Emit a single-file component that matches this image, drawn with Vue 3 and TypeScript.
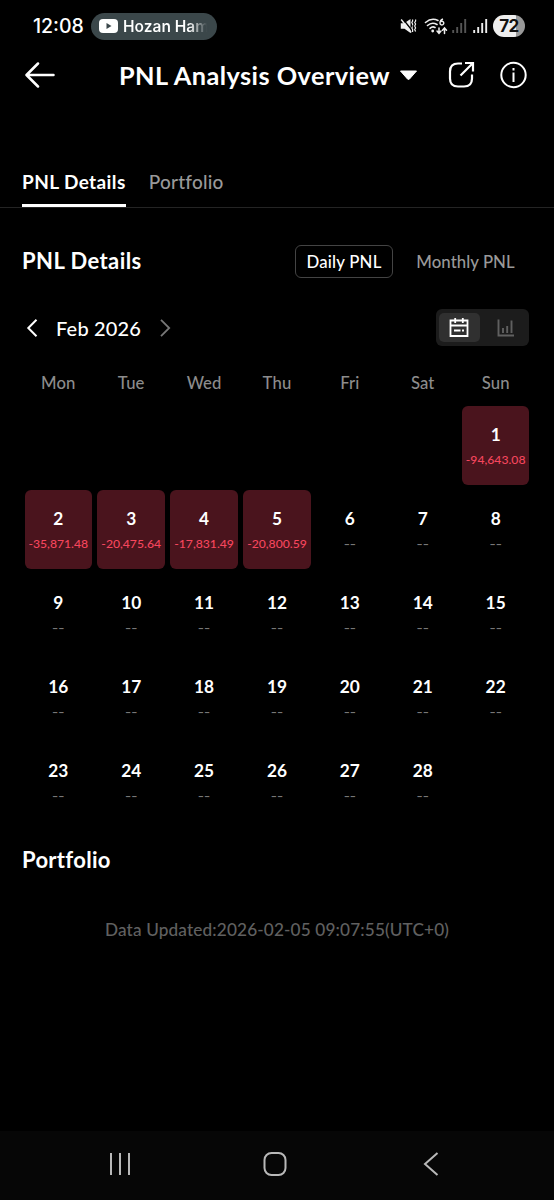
<script setup lang="ts">
interface Day { n: number; pnl: string }
const weekdays: string[] = ['Mon', 'Tue', 'Wed', 'Thu', 'Fri', 'Sat', 'Sun']
const results: Record<number, string> = {
  1: '-94,643.08', 2: '-35,871.48', 3: '-20,475.64', 4: '-17,831.49', 5: '-20,800.59',
}
const days: Day[] = Array.from({ length: 28 }, (_, i) => ({ n: i + 1, pnl: results[i + 1] ?? '' }))
</script>

<template>
  <main class="screen">
    <div class="status">
      <span class="clock">12:08</span>
      <div class="pill">
        <svg width="19" height="14" viewBox="0 0 19 14"><rect width="19" height="14" rx="4" fill="#fff" /><path d="M7.5 4v6l5-3z" fill="#3b474a" /></svg>
        <span class="pill-text">Hozan Ham</span>
      </div>
      <div class="indicators">
        <svg width="17" height="16" viewBox="0 0 17 16">
          <path d="M.8 5.200h3.400L10.500 1v14L4.500 10.800H.8z" fill="#eee" />
          <path d="M2.500 .5l10 12.500" stroke="#000" stroke-width="1.300" />
          <path d="M1.200 1.500l10 13" stroke="#eee" stroke-width="1.400" />
          <path d="M12.600 1.500v1.500l-.8 1.500.8 1.500v1.500M12.600 8.500l-.8 1.500.8 1.500v2.500M15.600 1.500v1.500l-.9 1.500.9 1.500-.9 2 .9 2-.9 1.500.9 2" fill="none" stroke="#eee" stroke-width="1.200" />
        </svg>
        <svg class="i-wifi" width="24" height="17" viewBox="0 0 24 17">
          <g fill="none" stroke="#eee" stroke-width="1.6" stroke-linecap="round">
            <path d="M1.500 4.500Q7.500-.7 14 2.500M3.500 7.500Q8 3.500 13 6.500M6 10.300Q8.500 8 11 9.500" />
            <path d="M15 10v5M13 13l2 2.300 2-2.300M20.500 15.500v-5M18.500 12.300l2-2.300 2 2.300" stroke-width="1.500" />
          </g>
          <circle cx="8.700" cy="13" r="1.400" fill="#eee" />
          <path d="M19 1Q16 2 16 5a1.900 1.900 0 1 0 .5-1.200" fill="none" stroke="#eee" stroke-width="1.400" />
        </svg>
        <svg class="i-bars" width="15" height="16" viewBox="0 0 15 16"><path d="M1.200 12v3M5.200 9v6M9.200 5v10M13.200 1v14" stroke="#555" stroke-width="1.900" /></svg>
        <svg class="i-bars2" width="15" height="16" viewBox="0 0 15 16"><path d="M1.200 12v3M5.200 9v6M9.200 5v10M13.200 1v14" stroke="#eee" stroke-width="1.900" /></svg>
        <span class="battery">72</span>
      </div>
    </div>

    <header class="header">
      <svg width="30" height="26" viewBox="0 0 30 26"><path d="M28.500 13H2M13 1.500L1.500 13 13 24.500" fill="none" stroke="#fff" stroke-width="2.500" stroke-linecap="round" stroke-linejoin="round" /></svg>
      <h1 class="title">PNL Analysis Overview</h1>
      <svg class="caret" width="19" height="12" viewBox="0 0 19 12"><path d="M1.500 2h16L10.500 10q-1 1-2 0z" fill="#fff" stroke="#fff" stroke-linejoin="round" /></svg>
      <svg class="share" width="27" height="28" viewBox="0 0 27 28"><path d="M14 2.500H10Q2 2.500 2 10.500v7q0 8 8 8h6q8 0 8-8V13.500M12.500 14.500L24 3M17 2h8v8.500" fill="none" stroke="#fff" stroke-width="2.200" /></svg>
      <svg class="info" width="27" height="28" viewBox="0 0 27 28"><circle cx="13.500" cy="14" r="12.200" fill="none" stroke="#fff" stroke-width="2" /><path d="M13.500 11.500v9.500M13.500 7v2.500" stroke="#fff" stroke-width="2" /></svg>
    </header>

    <nav class="tabs">
      <a class="tab active">PNL Details</a>
      <a class="tab">Portfolio</a>
    </nav>

    <section class="details">
      <h2 class="heading">PNL Details</h2>
      <button class="mode selected">Daily PNL</button>
      <button class="mode monthly">Monthly PNL</button>
    </section>

    <div class="month-row">
      <svg width="12" height="18" viewBox="0 0 12 18"><path d="M10.500 .8L2.300 9l8.200 8.200" fill="none" stroke="#fff" stroke-width="2" /></svg>
      <span class="month">Feb 2026</span>
      <svg width="12" height="18" viewBox="0 0 12 18"><path d="M1 .8L9.200 9 1 17.200" fill="none" stroke="#777" stroke-width="1.800" /></svg>
      <div class="toggle">
        <span class="view on">
          <svg width="20" height="21" viewBox="0 0 20 21"><path d="M1.500 3.500h17v15.500h-17zM1.500 8.500h17M6.200 1v5M13.800 1v5" fill="none" stroke="#fff" stroke-width="1.800" /><path d="M5 13.500h6.500M13 13.500h2" stroke="#fff" stroke-width="1.800" /></svg>
        </span>
        <span class="view">
          <svg width="18" height="18" viewBox="0 0 18 18"><path d="M1.500 .5v16H17M6 14V9M10.200 14V7M14.500 14V1.500" fill="none" stroke="#606060" stroke-width="1.900" /></svg>
        </span>
      </div>
    </div>

    <div class="week"><span v-for="w in weekdays" :key="w">{{ w }}</span></div>
    <div class="grid">
      <div v-for="d in days" :key="d.n" class="day" :class="{ first: d.n === 1, loss: d.pnl }">
        <b class="num">{{ d.n }}</b>
        <span class="pnl">{{ d.pnl || '--' }}</span>
      </div>
    </div>

    <h2 class="heading portfolio">Portfolio</h2>
    <p class="updated">Data Updated:2026-02-05 09:07:55(UTC+0)</p>

    <footer class="navbar">
      <svg width="22" height="24" viewBox="0 0 22 24"><path d="M2 1v22M11 1v22M20 1v22" stroke="#b8b8b8" stroke-width="2" /></svg>
      <svg width="24" height="24" viewBox="0 0 24 24"><rect x="1.500" y="1" width="21" height="22" rx="7" fill="none" stroke="#b8b8b8" stroke-width="2" /></svg>
      <svg width="16" height="24" viewBox="0 0 16 24"><path d="M14.500 1L2 12l12.500 11" fill="none" stroke="#b8b8b8" stroke-width="2" /></svg>
    </footer>
  </main>
</template>

<style>
html, body { background: #000; }
</style>
<style scoped>
.screen { width: 554px; height: 1200px; box-sizing: border-box; background: #000; color: #fff; font-family: Lato, "Noto Sans", sans-serif; display: flex; flex-direction: column; overflow: hidden; white-space: nowrap; }
svg { display: block; flex: none; }
h1, h2, p { margin: 0; }
.status { height: 50px; flex: none; display: flex; align-items: center; padding: 2px 29px 0 33px; box-sizing: border-box; }
.clock { font: 500 19.500px/24px Inter, sans-serif; width: 58px; }
.pill { width: 126px; height: 27px; border-radius: 14px; background: #3b474a; display: flex; align-items: center; gap: 5px; padding-left: 8px; box-sizing: border-box; }
.pill-text { font: 600 15.500px/22px Inter, sans-serif; background: linear-gradient(90deg, #fff 66px, #3b474a 84px); background-clip: text; color: transparent; padding-top: 1px; }
.indicators { margin-left: auto; display: flex; align-items: center; }
.i-wifi { margin-left: 7px; }
.i-bars { margin-left: 4px; }
.i-bars2 { margin-left: 6px; }
.battery { margin-left: 5px; width: 32px; height: 22px; border-radius: 11px; background: linear-gradient(90deg, #eee 72%, #999 72%); color: #111; font: 700 17px/22px Inter, sans-serif; letter-spacing: -.5px; text-align: center; }
.header { height: 50px; flex: none; display: flex; align-items: center; padding-left: 25px; }
.title { font-size: 25.300px; line-height: 30px; font-weight: 700; letter-spacing: .46px; margin-left: 64px; width: 271px; }
.caret { margin-left: 9px; }
.share { margin-left: 30px; }
.info { margin-left: 25px; }
.tabs { height: 108px; flex: none; box-sizing: border-box; border-bottom: 1px solid #242424; display: flex; align-items: flex-end; gap: 23px; padding-left: 22px; }
.tab { font-size: 19px; line-height: 24px; padding-bottom: 10px; border-bottom: 3px solid transparent; color: #999; letter-spacing: .22px; font-weight: 500; }
.tab.active { color: #fff; border-color: #fff; font-weight: 700; letter-spacing: .4px; }
.details { height: 107px; flex: none; display: flex; align-items: center; padding: 0 27px 0 22px; }
.heading { font-size: 22px; line-height: 28px; font-weight: 700; letter-spacing: .43px; }
.details .heading { margin-top: -1px; }
.mode { font: 500 16.800px/20px Lato, sans-serif; background: none; border: 0; color: #999; padding: 0; letter-spacing: .05px; }
.mode.selected { color: #fff; border: 1.500px solid #444; border-radius: 6px; width: 98px; height: 33px; margin-left: auto; letter-spacing: .2px; }
.monthly { width: 99px; margin: 0 12px 0 23px; }
.month-row { height: 38px; margin-top: -6px; flex: none; display: flex; align-items: center; padding: 0 25px 0 26px; }
.month { font-size: 20px; line-height: 26px; width: 86px; margin: 0 18px; font-weight: 500; letter-spacing: .18px; }
.toggle { margin-left: auto; width: 93px; height: 37px; margin-top: -1px; background: #1c1c1c; border-radius: 6px; display: flex; align-items: center; justify-content: space-between; padding: 0 3px; box-sizing: border-box; }
.view { width: 41px; height: 29px; display: flex; align-items: center; justify-content: center; border-radius: 5px; }
.view.on { background: #303030; padding-right: 1px; box-sizing: border-box; }
.week, .grid { display: grid; grid-template-columns: repeat(7, 67.600px); column-gap: 5.300px; padding-left: 24.500px; text-align: center; }
.week { margin-top: 24px; height: 35px; font-size: 16.700px; line-height: 24px; color: #8c8c8c; font-weight: 500; letter-spacing: .1px; }
.grid { grid-auto-rows: 79px; row-gap: 5px; }
.day { display: flex; flex-direction: column; align-items: center; border-radius: 6px; padding-top: 18px; box-sizing: border-box; }
.first { grid-column: 7; }
.loss { background: #4a141d; }
.num { font-size: 17.300px; line-height: 22px; }
.pnl { font: 400 13.500px/16px Inter, sans-serif; margin-top: 6px; color: #777; }
.loss .pnl { font: 500 12.200px/16px Lato, sans-serif; color: #f6465d; }
.portfolio { margin: 25px 0 0 22px; letter-spacing: .3px; }
.updated { margin-top: 44px; text-align: center; font-size: 17.200px; line-height: 24px; letter-spacing: .15px; font-weight: 500; color: #606060; }
.navbar { margin-top: auto; height: 69px; flex: none; background: #060606; display: flex; align-items: center; justify-content: space-between; padding: 0 115px 3px 109px; box-sizing: border-box; }
.navbar svg:nth-child(2) { margin-right: 4px; }
</style>
